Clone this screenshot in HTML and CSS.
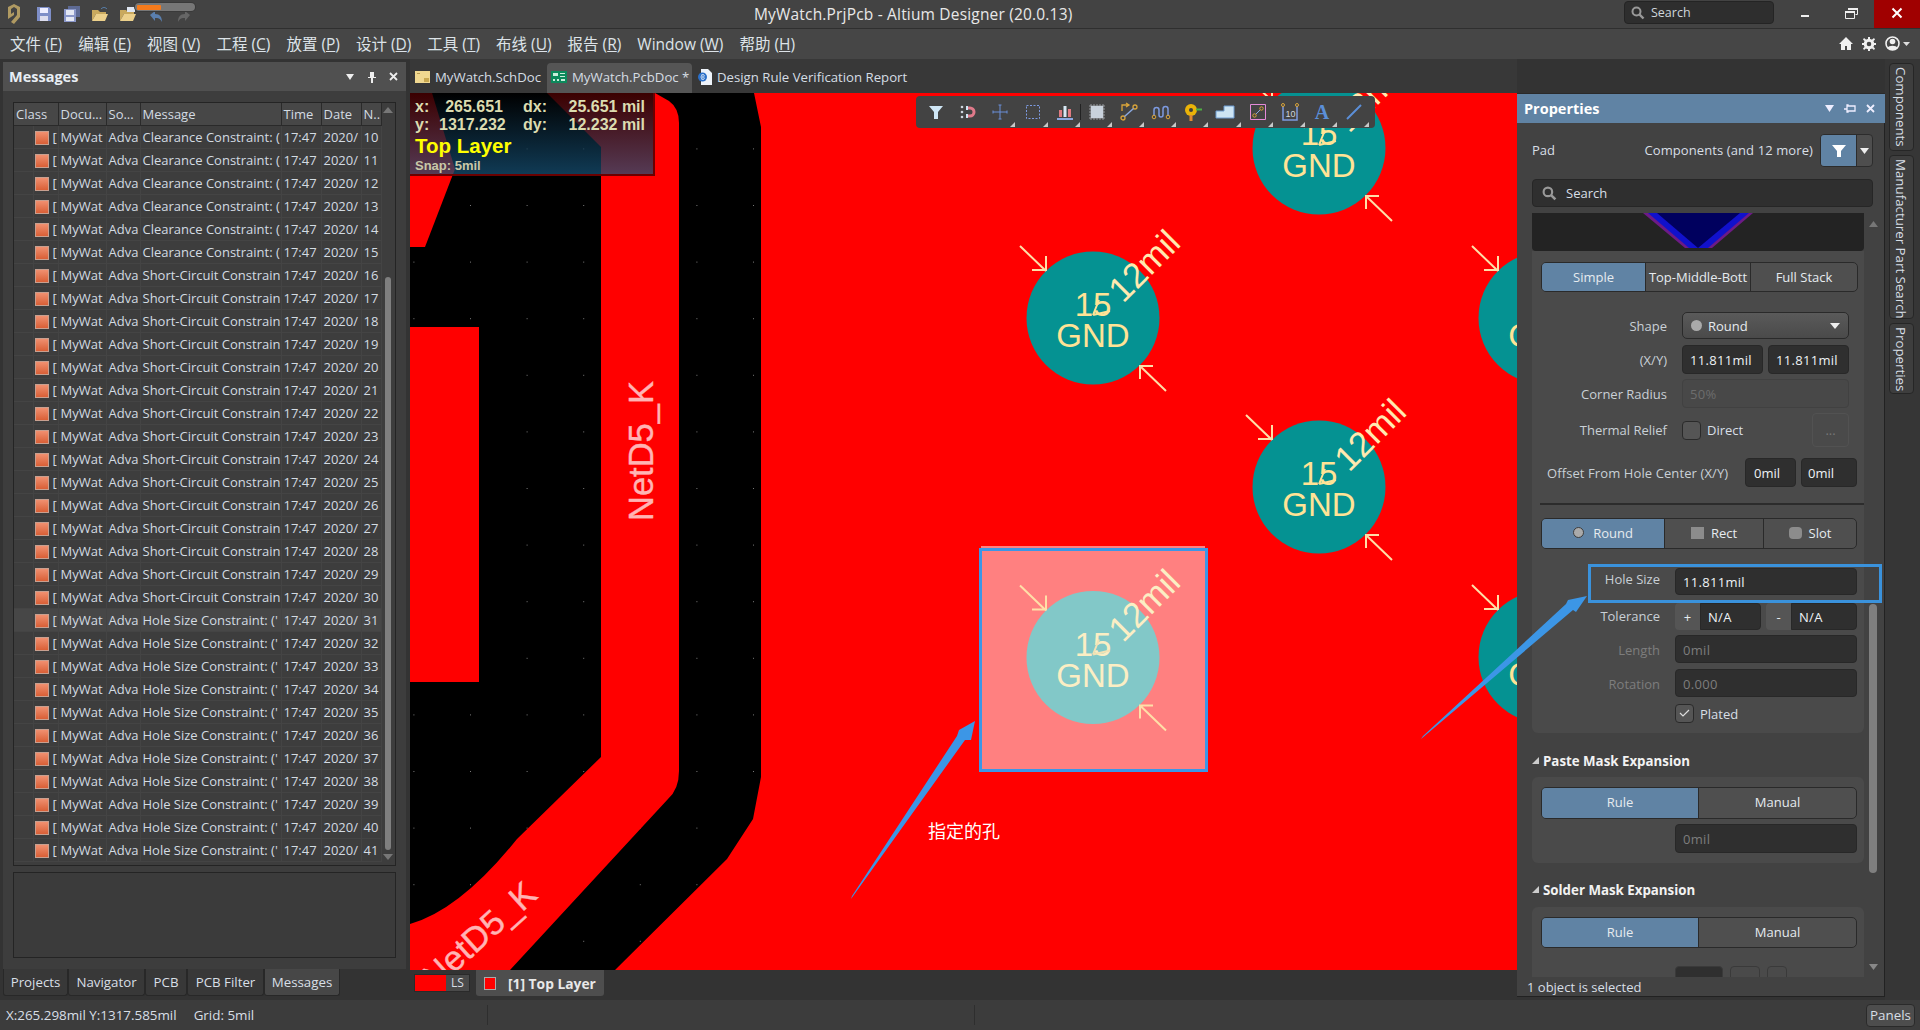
FILE: index.html
```html
<!DOCTYPE html>
<html lang="en">
<head>
<meta charset="utf-8">
<title>MyWatch.PrjPcb - Altium Designer (20.0.13)</title>
<link rel="stylesheet" href="styles.css">
</head>
<body>
<div class="app">
  <header class="titlebar">
    <div class="tb-left">
      <svg class="logo" width="14" height="20" viewBox="0 0 14 20"><path d="M1 3 7 0l6 3v10l-6 7-3-2 6-7V5L7 3 4 5v5l3-2v3l-6 4z" fill="#b09a62"/></svg>
      <svg class="qa" width="16" height="16" viewBox="0 0 16 16"><path d="M1 1h12l2 2v12H1z" fill="#7f8fc8"/><path d="M4 2h8v5H4z" fill="#eef"/><path d="M4 10h8v5H4z" fill="#dde"/></svg>
      <svg class="qa" width="18" height="16" viewBox="0 0 18 16"><path d="M5 0h12v11H5z" fill="#5d6a94"/><path d="M1 3h12v13H1z" fill="#8a97c9"/><path d="M3 4h8v5H3zM3 11h8v4H3z" fill="#e4e8f4"/></svg>
      <svg class="qa" width="18" height="16" viewBox="0 0 18 16"><path d="M1 4h6l2 2h6v2H5L1 15z" fill="#c9a95e"/><path d="M5 8h12l-3 7H1z" fill="#ecd08b"/><path d="M10 3c2-2 4-2 6 0" stroke="#5b87b8" fill="none"/></svg>
      <svg class="qa" width="18" height="16" viewBox="0 0 18 16"><path d="M1 4h6l2 2h6v2H5L1 15z" fill="#c9a95e"/><path d="M5 8h12l-3 7H1z" fill="#ecd08b"/><path d="M8 1h8v5H8z" fill="#dfe6f2"/></svg>
      <svg class="qa dim" width="16" height="14" viewBox="0 0 16 14"><path d="M2 5l5-4v3c5 0 7 3 7 8-2-4-4-4-7-4v3z" fill="#5a7fae"/></svg>
      <svg class="qa dim" width="16" height="14" viewBox="0 0 16 14"><path d="M14 5 9 1v3C4 4 2 7 2 12c2-4 4-4 7-4v3z" fill="#666"/></svg>
    </div>
    <div class="tb-title">MyWatch.PrjPcb - Altium Designer (20.0.13)</div>
    <div class="tb-right">
      <div class="tb-search">
        <svg width="14" height="14" viewBox="0 0 14 14"><circle cx="5.500" cy="5.500" r="4" fill="none" stroke="#999" stroke-width="2"/><path d="m8.500 8.500 4 4" stroke="#999" stroke-width="2.400"/></svg>
        <span>Search</span>
      </div>
      <div class="win-btn"><svg width="10" height="10" viewBox="0 0 10 10"><path d="M1 7h8v2H1z" fill="#eee"/></svg></div>
      <div class="win-btn restore"><svg width="13" height="11" viewBox="0 0 13 11"><path d="M3.500 .5h9v6h-2M.5 3.500h9v7h-9z" fill="none" stroke="#eee"/><path d="M0 3h10v2H0zM3 0h10v2H3z" fill="#eee"/></svg></div>
      <div class="win-btn close"><svg width="12" height="12" viewBox="0 0 12 12"><path d="m1.500 1.500 9 9m0-9-9 9" stroke="#fff" stroke-width="2"/></svg></div>
    </div>
    <div class="progress"><span class="progress-fill"></span></div>
  </header>

  <nav class="menubar">
    <span>文件 (<u>F</u>)</span><span>编辑 (<u>E</u>)</span><span>视图 (<u>V</u>)</span><span>工程 (<u>C</u>)</span><span>放置 (<u>P</u>)</span><span>设计 (<u>D</u>)</span><span>工具 (<u>T</u>)</span><span>布线 (<u>U</u>)</span><span>报告 (<u>R</u>)</span><span>Window (<u>W</u>)</span><span>帮助 (<u>H</u>)</span>
    <div class="menu-icons">
      <svg width="14" height="13" viewBox="0 0 14 13"><path d="M7 0 0 7h2v6h4V9h2v4h4V7h2z" fill="#f0f0f0"/></svg>
      <svg width="14" height="14" viewBox="0 0 14 14"><circle cx="7" cy="7" r="3.800" fill="none" stroke="#f0f0f0" stroke-width="3"/><path d="M6 0h2v3H6zM6 11h2v3H6zM0 6h3v2H0zM11 6h3v2h-3zM2 1l2.500 2-1.500 1.500L1 2.500zM12 1 9.500 3 11 4.500 13 2.500zM2 13l2.500-2L3 9.500 1 11.500zM12 13 9.500 11 11 9.500l2 2z" fill="#f0f0f0"/></svg>
      <svg class="user" width="26" height="15" viewBox="0 0 26 15"><circle cx="7.500" cy="7.500" r="6.500" fill="none" stroke="#f0f0f0" stroke-width="1.600"/><circle cx="7.500" cy="5.500" r="2.800" fill="#f0f0f0"/><path d="M2.500 12c1-3 9-3 10 0l-2.500 2h-5z" fill="#f0f0f0"/><path d="m18 6 7 0-3.500 4z" fill="#ddd"/></svg>
    </div>
  </nav>

  <main class="workspace">
    <aside class="left">
      <section class="panel">
        <div class="panel-head">
          <strong>Messages</strong>
          <span class="panel-tools">
            <svg width="10" height="8" viewBox="0 0 10 8"><path d="M1 1h8L5 7z" fill="#eee"/></svg>
            <svg width="10" height="12" viewBox="0 0 10 12"><path d="M3 1h4v5h2v1H6v5H4V7H1V6h2z" fill="#eee"/></svg>
            <svg width="9" height="9" viewBox="0 0 9 9"><path d="m1 1 7 7m0-7-7 7" stroke="#eee" stroke-width="1.800"/></svg>
          </span>
        </div>
        <div class="panel-body">
          <div class="msg-wrap">
            <table class="msgs">
              <colgroup><col class="c-a"><col class="c-b"><col class="c-d"><col class="c-s"><col class="c-m"><col class="c-t"><col class="c-t"><col class="c-n"></colgroup>
              <thead><tr><th colspan="2">Class</th><th>Docu...</th><th>So...</th><th>Message</th><th>Time</th><th>Date</th><th>N..</th></tr></thead>
              <tbody>
                <tr><td></td><td><i class="sq"></i>[</td><td>MyWat</td><td>Adva</td><td>Clearance Constraint: (</td><td>17:47</td><td>2020/</td><td>10</td></tr>
                <tr><td></td><td><i class="sq"></i>[</td><td>MyWat</td><td>Adva</td><td>Clearance Constraint: (</td><td>17:47</td><td>2020/</td><td>11</td></tr>
                <tr><td></td><td><i class="sq"></i>[</td><td>MyWat</td><td>Adva</td><td>Clearance Constraint: (</td><td>17:47</td><td>2020/</td><td>12</td></tr>
                <tr><td></td><td><i class="sq"></i>[</td><td>MyWat</td><td>Adva</td><td>Clearance Constraint: (</td><td>17:47</td><td>2020/</td><td>13</td></tr>
                <tr><td></td><td><i class="sq"></i>[</td><td>MyWat</td><td>Adva</td><td>Clearance Constraint: (</td><td>17:47</td><td>2020/</td><td>14</td></tr>
                <tr><td></td><td><i class="sq"></i>[</td><td>MyWat</td><td>Adva</td><td>Clearance Constraint: (</td><td>17:47</td><td>2020/</td><td>15</td></tr>
                <tr><td></td><td><i class="sq"></i>[</td><td>MyWat</td><td>Adva</td><td>Short-Circuit Constrain</td><td>17:47</td><td>2020/</td><td>16</td></tr>
                <tr><td></td><td><i class="sq"></i>[</td><td>MyWat</td><td>Adva</td><td>Short-Circuit Constrain</td><td>17:47</td><td>2020/</td><td>17</td></tr>
                <tr><td></td><td><i class="sq"></i>[</td><td>MyWat</td><td>Adva</td><td>Short-Circuit Constrain</td><td>17:47</td><td>2020/</td><td>18</td></tr>
                <tr><td></td><td><i class="sq"></i>[</td><td>MyWat</td><td>Adva</td><td>Short-Circuit Constrain</td><td>17:47</td><td>2020/</td><td>19</td></tr>
                <tr><td></td><td><i class="sq"></i>[</td><td>MyWat</td><td>Adva</td><td>Short-Circuit Constrain</td><td>17:47</td><td>2020/</td><td>20</td></tr>
                <tr><td></td><td><i class="sq"></i>[</td><td>MyWat</td><td>Adva</td><td>Short-Circuit Constrain</td><td>17:47</td><td>2020/</td><td>21</td></tr>
                <tr><td></td><td><i class="sq"></i>[</td><td>MyWat</td><td>Adva</td><td>Short-Circuit Constrain</td><td>17:47</td><td>2020/</td><td>22</td></tr>
                <tr><td></td><td><i class="sq"></i>[</td><td>MyWat</td><td>Adva</td><td>Short-Circuit Constrain</td><td>17:47</td><td>2020/</td><td>23</td></tr>
                <tr><td></td><td><i class="sq"></i>[</td><td>MyWat</td><td>Adva</td><td>Short-Circuit Constrain</td><td>17:47</td><td>2020/</td><td>24</td></tr>
                <tr><td></td><td><i class="sq"></i>[</td><td>MyWat</td><td>Adva</td><td>Short-Circuit Constrain</td><td>17:47</td><td>2020/</td><td>25</td></tr>
                <tr><td></td><td><i class="sq"></i>[</td><td>MyWat</td><td>Adva</td><td>Short-Circuit Constrain</td><td>17:47</td><td>2020/</td><td>26</td></tr>
                <tr><td></td><td><i class="sq"></i>[</td><td>MyWat</td><td>Adva</td><td>Short-Circuit Constrain</td><td>17:47</td><td>2020/</td><td>27</td></tr>
                <tr><td></td><td><i class="sq"></i>[</td><td>MyWat</td><td>Adva</td><td>Short-Circuit Constrain</td><td>17:47</td><td>2020/</td><td>28</td></tr>
                <tr><td></td><td><i class="sq"></i>[</td><td>MyWat</td><td>Adva</td><td>Short-Circuit Constrain</td><td>17:47</td><td>2020/</td><td>29</td></tr>
                <tr><td></td><td><i class="sq"></i>[</td><td>MyWat</td><td>Adva</td><td>Short-Circuit Constrain</td><td>17:47</td><td>2020/</td><td>30</td></tr>
                <tr class="hot"><td></td><td><i class="sq"></i>[</td><td>MyWat</td><td>Adva</td><td>Hole Size Constraint: ('</td><td>17:47</td><td>2020/</td><td>31</td></tr>
                <tr><td></td><td><i class="sq"></i>[</td><td>MyWat</td><td>Adva</td><td>Hole Size Constraint: ('</td><td>17:47</td><td>2020/</td><td>32</td></tr>
                <tr><td></td><td><i class="sq"></i>[</td><td>MyWat</td><td>Adva</td><td>Hole Size Constraint: ('</td><td>17:47</td><td>2020/</td><td>33</td></tr>
                <tr><td></td><td><i class="sq"></i>[</td><td>MyWat</td><td>Adva</td><td>Hole Size Constraint: ('</td><td>17:47</td><td>2020/</td><td>34</td></tr>
                <tr><td></td><td><i class="sq"></i>[</td><td>MyWat</td><td>Adva</td><td>Hole Size Constraint: ('</td><td>17:47</td><td>2020/</td><td>35</td></tr>
                <tr><td></td><td><i class="sq"></i>[</td><td>MyWat</td><td>Adva</td><td>Hole Size Constraint: ('</td><td>17:47</td><td>2020/</td><td>36</td></tr>
                <tr><td></td><td><i class="sq"></i>[</td><td>MyWat</td><td>Adva</td><td>Hole Size Constraint: ('</td><td>17:47</td><td>2020/</td><td>37</td></tr>
                <tr><td></td><td><i class="sq"></i>[</td><td>MyWat</td><td>Adva</td><td>Hole Size Constraint: ('</td><td>17:47</td><td>2020/</td><td>38</td></tr>
                <tr><td></td><td><i class="sq"></i>[</td><td>MyWat</td><td>Adva</td><td>Hole Size Constraint: ('</td><td>17:47</td><td>2020/</td><td>39</td></tr>
                <tr><td></td><td><i class="sq"></i>[</td><td>MyWat</td><td>Adva</td><td>Hole Size Constraint: ('</td><td>17:47</td><td>2020/</td><td>40</td></tr>
                <tr><td></td><td><i class="sq"></i>[</td><td>MyWat</td><td>Adva</td><td>Hole Size Constraint: ('</td><td>17:47</td><td>2020/</td><td>41</td></tr>
              </tbody>
            </table>
            <div class="vscroll">
              <svg class="sb-arrow" width="10" height="6" viewBox="0 0 10 6"><path d="M0 6h10L5 0z" fill="#777"/></svg>
              <div class="sb-thumb"></div>
              <svg class="sb-arrow" width="10" height="6" viewBox="0 0 10 6"><path d="M0 0h10L5 6z" fill="#777"/></svg>
            </div>
          </div>
          <div class="msg-detail"></div>
        </div>
      </section>
      <div class="btabs">
        <span>Projects</span><span>Navigator</span><span>PCB</span><span>PCB Filter</span><span class="on">Messages</span>
      </div>
    </aside>

    <section class="center">
      <div class="doctabs">
        <div class="doctab t1">
          <svg width="15" height="12" viewBox="0 0 15 12"><path d="M0 0h15v12H0z" fill="#f0d890"/><path d="M9 7h5v4H9z" fill="#c9a850"/><path d="M2 2h3v1H2z" fill="#b89a50"/></svg>
          <span>MyWatch.SchDoc</span>
        </div>
        <div class="doctab t2 on">
          <svg width="16" height="12" viewBox="0 0 16 12"><path d="M0 0h16v12H0z" fill="#0c8a5c"/><path d="M2 2h5v3H2zM9 2h5v1H9zM9 5h5v1H9zM2 8h2v2H2zM6 8h2v2H6zM10 8h4v2h-4z" fill="#c9eedb"/></svg>
          <span>MyWatch.PcbDoc *</span>
        </div>
        <div class="doctab t3">
          <svg width="14" height="16" viewBox="0 0 14 16"><path d="M3 0h7l4 4v12H3z" fill="#eef3fa"/><circle cx="4.500" cy="8" r="4.500" fill="#2a6fc9"/><path d="M2.500 8h4M3 6.500c1-1 3-1 3.500 0M3 9.500c1 1 3 1 3.500 0" stroke="#fff" fill="none"/></svg>
          <span>Design Rule Verification Report</span>
        </div>
      </div>

      <div class="canvas">
        <svg class="board" width="1107" height="877" viewBox="410 93 1107 877">
          <defs>
            <pattern id="grid" x="470" y="205" width="56.600" height="56.600" patternUnits="userSpaceOnUse"><rect width="1" height="1" fill="#7a7a7a"/></pattern>
            <g id="marks" class="mark">
              <path d="M-73-72-47-47M-61-48h14v-14"/>
              <path d="M73 73 47 48M60 48H47v13"/>
            </g>
          </defs>
          <rect x="410" y="93" width="1107" height="877" fill="#000"/>
          <rect x="410" y="93" width="1107" height="877" fill="url(#grid)"/>
          <path class="cu" d="M410 93h22l23 76-30 78h-15z"/>
          <path class="cu" d="M410 327h69v355h-69z"/>
          <path class="cu" d="M547 93h108l14 8q10 7 10 22V771q0 18-11 28L510 970H410V924q50-14 107-85l84-82V147z"/>
          <path class="cu" d="M754 93l7 34V777l-8 42-26 40L615 970H1517V93z"/>
          <text class="net" transform="translate(653 521) rotate(-90)">NetD5_K</text>
          <text class="net" transform="translate(539 897) rotate(-42)" text-anchor="end">NetD5_K</text>

          <g class="pad" transform="translate(1319 148)">
            <circle r="66.500"/><use href="#marks"/>
            <text class="pn" y="-3" text-anchor="middle">15</text><path class="smear" d="M0-3 6-18M0-3 17-7"/>
            <text class="pn" y="29" text-anchor="middle">GND</text>
            <text class="dim" transform="translate(30 -14) rotate(-45)">12mil</text>
          </g>
          <g class="pad" transform="translate(1093 318)">
            <circle r="66.500"/><use href="#marks"/>
            <text class="pn" y="-2" text-anchor="middle">15</text><path class="smear" d="M0-3 6-18M0-3 17-7"/>
            <text class="pn" y="29" text-anchor="middle">GND</text>
            <text class="dim" transform="translate(30 -14) rotate(-45)">12mil</text>
          </g>
          <g class="pad" transform="translate(1319 487)">
            <circle r="66.500"/><use href="#marks"/>
            <text class="pn" y="-2" text-anchor="middle">15</text><path class="smear" d="M0-3 6-18M0-3 17-7"/>
            <text class="pn" y="29" text-anchor="middle">GND</text>
            <text class="dim" transform="translate(30 -14) rotate(-45)">12mil</text>
          </g>
          <g class="pad" transform="translate(1545 318)">
            <circle r="66.500"/><use href="#marks"/>
            <text class="pn" y="29" text-anchor="middle">GND</text>
          </g>
          <g class="pad" transform="translate(1545 657)">
            <circle r="66.500"/><use href="#marks"/>
            <text class="pn" y="29" text-anchor="middle">GND</text>
          </g>
          <rect x="981" y="546" width="224" height="3" fill="#ff8080"/>
          <rect class="sel-box" x="980.500" y="549.500" width="226" height="221"/>
          <g class="pad sel" transform="translate(1093 657.500)">
            <circle r="66.500"/><use href="#marks"/>
            <text class="pn" y="-2" text-anchor="middle">15</text><path class="smear" d="M0-3 6-18M0-3 17-7"/>
            <text class="pn" y="29" text-anchor="middle">GND</text>
            <text class="dim" transform="translate(30 -14) rotate(-45)">12mil</text>
          </g>
          <text class="note" x="928" y="838">指定的孔</text>
        </svg>

        <div class="info">
          <span class="k">x:</span><span class="v">265.651</span><span class="k">dx:</span><span class="v">25.651 mil</span>
          <span class="k">y:</span><span class="v">1317.232</span><span class="k">dy:</span><span class="v">12.232 mil</span>
          <span class="layer">Top Layer</span>
          <span class="snap">Snap: 5mil</span>
        </div>

        <div class="toolbar">
          <span class="tbtn plain"><svg width="20" height="20" viewBox="0 0 20 20"><path d="M3 4h14l-5 6v7H8v-7z" fill="#cfe6f5"/></svg></span>
          <span class="tbtn plain"><svg width="20" height="20" viewBox="0 0 20 20"><path d="M8 6h4a4 4 0 0 1 0 8H8" fill="none" stroke="#e07a8a" stroke-width="3"/><path d="M8 4h2v4H8zM8 12h2v4H8z" fill="#cfe6f5"/><circle cx="4" cy="5" r="1.300" fill="#cfd6de"/><circle cx="4" cy="10" r="1.300" fill="#cfd6de"/><circle cx="4" cy="15" r="1.300" fill="#cfd6de"/></svg></span>
          <span class="tbtn"><svg width="20" height="20" viewBox="0 0 20 20"><path d="M10 3v14M3 10h14M8.500 3h3M8.500 17h3M3 8.500v3M17 8.500v3" stroke="#6a8fd8" fill="none"/></svg></span>
          <span class="tbtn"><svg width="20" height="20" viewBox="0 0 20 20"><path d="M3.500 3.500h13v13h-13z" fill="none" stroke="#7d9ae0" stroke-dasharray="2 1.500"/></svg></span>
          <span class="tbtn divider"><svg width="20" height="20" viewBox="0 0 20 20"><path d="M4 8h3v7H4z" fill="#e07a80"/><path d="M8.500 4h3v11h-3z" fill="#d8e8f4"/><path d="M13 7h3v8h-3z" fill="#e07a80"/><path d="M2 16h16v2H2z" fill="#8aa8e0"/></svg></span>
          <span class="tbtn"><svg width="20" height="20" viewBox="0 0 20 20"><path d="M2 4h16M2 7h16M2 10h16M2 13h16M2 16h16M4 2v16M7 2v16M10 2v16M13 2v16M16 2v16" stroke="#a9adb3" stroke-width=".8"/><path d="M4 4h12v12H4z" fill="#c9d2dc"/></svg></span>
          <span class="tbtn"><svg width="20" height="20" viewBox="0 0 20 20"><path d="M3 9V3h6M7 1l3 2-3 2" fill="none" stroke="#d9a43a" stroke-width="1.300"/><circle cx="4" cy="16" r="2" fill="none" stroke="#d9a43a" stroke-width="1.300"/><circle cx="16" cy="5" r="2" fill="none" stroke="#d9a43a" stroke-width="1.300"/><path d="M5.500 14.500 14.500 6.500" stroke="#8aa8e0" stroke-width="1.500"/></svg></span>
          <span class="tbtn"><svg width="20" height="20" viewBox="0 0 20 20"><path d="M3 14V8a2.500 2.500 0 0 1 5 0v5a2 2 0 0 0 4 0V7a2.500 2.500 0 0 1 5 0v7" fill="none" stroke="#7d9ae0" stroke-width="1.500"/><circle cx="3" cy="15" r="1.800" fill="none" stroke="#d9a43a"/><circle cx="17" cy="15" r="1.800" fill="none" stroke="#d9a43a"/></svg></span>
          <span class="tbtn"><svg width="20" height="20" viewBox="0 0 20 20"><circle cx="8" cy="8" r="6" fill="#eab308"/><circle cx="8" cy="8" r="2" fill="#3d3d3d"/><path d="M6.500 13h3v6h-3z" fill="#e08a30"/><path d="M13 6.500h6v2h-6z" fill="#4fb043"/></svg></span>
          <span class="tbtn"><svg width="20" height="20" viewBox="0 0 20 20"><path d="M1 9h8V4h10v12H1z" fill="#cde4f3" stroke="#6c9bd0"/></svg></span>
          <span class="tbtn"><svg width="20" height="20" viewBox="0 0 20 20"><path d="M2.500 2.500h15v15h-15z" fill="none" stroke="#e58ad8"/><circle cx="6.500" cy="13.500" r="1.700" fill="none" stroke="#d9a43a"/><circle cx="13.500" cy="6.500" r="1.700" fill="none" stroke="#d9a43a"/><path d="m8 12 4-4" stroke="#8aa8e0"/></svg></span>
          <span class="tbtn"><svg width="20" height="20" viewBox="0 0 20 20"><path d="M3 4v14h14V4" fill="none" stroke="#7d9ae0" stroke-width="1.500"/><circle cx="3" cy="3" r="1.500" fill="none" stroke="#d9a43a"/><circle cx="17" cy="3" r="1.500" fill="none" stroke="#d9a43a"/><text class="tb-ten" x="5.500" y="15">10</text></svg></span>
          <span class="tbtn tbtn-a">A</span>
          <span class="tbtn"><svg width="20" height="20" viewBox="0 0 20 20"><path d="M3 17 17 3" stroke="#5b8fd8" stroke-width="2"/></svg></span>
        </div>
      </div>

      <div class="layerbar">
        <div class="ls"><span class="ls-red"></span><span class="ls-txt">LS</span></div>
        <div class="layertab"><i class="lay-swatch"></i><b>[1] Top Layer</b></div>
      </div>
    </section>

    <aside class="props">
      <div class="props-head">
        <strong>Properties</strong>
        <span class="panel-tools ptools">
          <svg width="9" height="7" viewBox="0 0 9 7"><path d="M0 0h9L4.500 7z" fill="#eef"/></svg>
          <svg width="12" height="10" viewBox="0 0 12 10"><path d="M0 5h3M3 1h1v1h7v5H4v1H3z" fill="none" stroke="#eef" stroke-width="1.300"/></svg>
          <svg width="9" height="9" viewBox="0 0 9 9"><path d="m1 1 7 7m0-7-7 7" stroke="#eef" stroke-width="1.800"/></svg>
        </span>
      </div>
      <div class="props-scroll">
        <div class="p-top">
          <span class="p-pad">Pad</span>
          <span class="p-comp">Components (and 12 more)</span>
          <div class="filterbtn">
            <span class="f-main"><svg width="16" height="14" viewBox="0 0 16 14"><path d="M1 1h14l-5 6v6H6V7z" fill="#fff"/></svg></span>
            <span class="f-drop"><svg width="9" height="6" viewBox="0 0 9 6"><path d="M0 0h9L4.500 6z" fill="#eee"/></svg></span>
          </div>
        </div>
        <div class="p-search">
          <svg width="15" height="15" viewBox="0 0 14 14"><circle cx="5.500" cy="5.500" r="4" fill="none" stroke="#999" stroke-width="2"/><path d="m8.500 8.500 4 4" stroke="#999" stroke-width="2.400"/></svg>
          <span>Search</span>
        </div>
        <div class="preview">
          <svg width="332" height="38" viewBox="0 0 332 38"><path d="M111 0h110l-41 35h-27z" fill="#6d1a86"/><path d="M116 0h101l-41 35h-19z" fill="#1111cc"/><path d="M125 0h83l-42 35z" fill="#00005e"/></svg>
        </div>
        <div class="card c1">
          <div class="seg s-top"><span class="on w1">Simple</span><span class="w2">Top-Middle-Bott</span><span class="w3">Full Stack</span></div>
          <div class="frow r-shape"><label>Shape</label><div class="select"><i class="dot"></i><span>Round</span><svg width="10" height="6" viewBox="0 0 10 6"><path d="M0 0h10L5 6z" fill="#eee"/></svg></div></div>
          <div class="frow r-xy"><label>(X/Y)</label><div class="pair"><div class="inp">11.811mil</div><div class="inp">11.811mil</div></div></div>
          <div class="frow r-corner"><label>Corner Radius</label><div class="inp off-light">50%</div></div>
          <div class="frow r-therm"><label>Thermal Relief</label><div class="therm"><i class="chk"></i><span>Direct</span><span class="dots">...</span></div></div>
          <div class="r-offset"><label>Offset From Hole Center (X/Y)</label><div class="inp">0mil</div><div class="inp">0mil</div></div>
          <hr class="rule">
          <div class="seg s-hole"><span class="on h1"><i class="dot ring"></i>Round</span><span class="h2"><i class="sq-ic"></i>Rect</span><span class="h3"><i class="slot-ic"></i>Slot</span></div>
          <div class="frow wide r-hole"><label class="up">Hole Size</label><div class="inp">11.811mil</div></div>
          <div class="frow wide r-tol"><label>Tolerance</label>
            <div class="tol"><span class="pm">+</span><div class="inp">N/A</div><span class="pm gapl">-</span><div class="inp">N/A</div></div></div>
          <div class="frow wide r-len"><label class="mute">Length</label><div class="inp off">0mil</div></div>
          <div class="frow wide r-rot"><label class="mute">Rotation</label><div class="inp off">0.000</div></div>
          <div class="frow wide r-plated"><label></label><div class="therm"><i class="chk"><svg width="11" height="9" viewBox="0 0 11 9"><path d="m1 4 3 3 6-6" fill="none" stroke="#ddd" stroke-width="1.200"/></svg></i><span>Plated</span></div></div>
        </div>
        <div class="sect-title"><svg width="7" height="7" viewBox="0 0 7 7"><path d="M7 0v7H0z" fill="#ccc"/></svg><strong>Paste Mask Expansion</strong></div>
        <div class="card c2">
          <div class="seg s-rule"><span class="on">Rule</span><span>Manual</span></div>
          <div class="frow wide r-paste"><label></label><div class="inp off">0mil</div></div>
        </div>
        <div class="sect-title s-solder"><svg width="7" height="7" viewBox="0 0 7 7"><path d="M7 0v7H0z" fill="#ccc"/></svg><strong>Solder Mask Expansion</strong></div>
        <div class="card c3">
          <div class="seg s-rule s2"><span class="on">Rule</span><span>Manual</span></div>
          <div class="cut-row"><i class="cut a"></i><i class="cut b"></i><i class="cut c"></i></div>
        </div>
      </div>
      <div class="p-sb"></div>
      <svg class="p-arrow up-a" width="9" height="6" viewBox="0 0 9 6"><path d="M0 6h9L4.500 0z" fill="#777"/></svg>
      <svg class="p-arrow down-a" width="9" height="6" viewBox="0 0 9 6"><path d="M0 0h9L4.500 6z" fill="#888"/></svg>
      <div class="p-foot">1 object is selected</div>
    </aside>

    <aside class="rail">
      <span class="rtab r1">Components</span>
      <span class="rtab r2">Manufacturer Part Search</span>
      <span class="rtab r3">Properties</span>
    </aside>
  </main>

  <footer class="status">
    <span class="st-xy">X:265.298mil Y:1317.585mil</span>
    <span class="st-grid">Grid: 5mil</span>
    <i class="st-sep s1"></i>
    <i class="st-sep s2"></i>
    <span class="panels-btn">Panels</span>
  </footer>

  <svg class="annot" width="1920" height="1030" viewBox="0 0 1920 1030">
    <rect class="hl" x="1589.500" y="565.500" width="291" height="36"/>
    <path class="ar" d="M851 899 852 896 957 736 959 730 975 721 971 740 965 740z"/>
    <path class="ar" d="M1421 739 1423 736 1566 604 1568 600 1587 596 1576 612 1573 610z"/>
  </svg>
</div>
</body>
</html>
```
FILE: styles.css
```css
* { box-sizing: border-box; }
html, body { margin: 0; padding: 0; height: 100%; overflow: hidden; background: #333; }
body { font-family: "Open Sans", "Noto Sans CJK SC", sans-serif; font-size: 13px; color: #d8dfe6; }
.app { position: relative; width: 1920px; height: 1030px; display: flex; flex-direction: column; overflow: hidden; background: #333; }

/* title bar */
.titlebar { position: relative; height: 29px; flex: none; display: flex; align-items: center; background: #434343; border-bottom: 1px solid #2f2f2f; }
.tb-left { width: 754px; flex: none; display: flex; align-items: center; padding-left: 7px; }
.logo { margin-right: 14px; }
.qa { width: 18px; margin-right: 10px; flex: none; }
.qa.dim { margin-top: 5px; }
.tb-title { font-size: 15.500px; letter-spacing: .18px; color: #e8e8e8; white-space: nowrap; }
.tb-right { margin-left: auto; display: flex; align-items: flex-start; height: 28px; }
.tb-search { width: 150px; height: 23px; margin: 1px 8px 0 0; display: flex; align-items: center; gap: 6px; padding-left: 6px; background: #2e2e2e; border: 1px solid #242424; border-radius: 4px; color: #cfd6dc; font-size: 12.500px; }
.win-btn { width: 46px; height: 28px; display: flex; align-items: center; justify-content: center; padding-bottom: 2px; }
.win-btn.close { background: #a00000; }
.progress { position: absolute; left: 135px; top: 3px; width: 60px; height: 8px; background: #777; border-radius: 4px; box-shadow: 0 0 0 1px #3a3a3a; }
.progress-fill { display: block; width: 24px; height: 5px; margin: 1.500px 2px; background: #f47a1c; border-radius: 1px; }

/* menu */
.menubar { height: 30px; flex: none; display: flex; align-items: center; gap: 16px; padding: 0 0 1px 10px; background: #464646; font-size: 15.500px; color: #dde3e8; white-space: nowrap; }
.menu-icons { margin-left: auto; display: flex; align-items: center; gap: 9px; padding-right: 9px; }

/* workspace */
.workspace { height: 941px; flex: none; display: flex; background: #333; }
.left { width: 410px; flex: none; padding: 3px 4px 0 3px; display: flex; flex-direction: column; }
.panel { height: 907px; flex: none; display: flex; flex-direction: column; background: #3d3d3d; }
.panel-head { height: 29px; flex: none; display: flex; align-items: center; justify-content: space-between; padding: 0 6px; background: #505050; font-size: 14.500px; color: #e8eef4; }
.panel-tools { display: flex; align-items: center; gap: 12px; padding-right: 2px; }
.panel-body { flex: 1; padding: 11px 10px 11px; display: flex; flex-direction: column; gap: 6px; }
.msg-wrap { height: 764px; flex: none; display: flex; border: 1px solid #242424; }
.msgs { width: 367px; flex: none; table-layout: fixed; border-collapse: collapse; font-size: 13px; color: #d3dbe2; align-self: flex-start; }
.c-a { width: 19px; } .c-b { width: 25px; } .c-d { width: 48px; } .c-s { width: 34px; } .c-m { width: 141px; } .c-t { width: 40px; } .c-n { width: 20px; }
.msgs th { height: 22px; font-weight: 400; text-align: left; padding: 0 2px; background: #474747; border-bottom: 1px solid #2a2a2a; border-right: 1px solid #2a2a2a; white-space: nowrap; overflow: hidden; }
.msgs td { height: 23px; padding: 0 2px; white-space: nowrap; overflow: hidden; border-right: 1px solid #444; border-bottom: 1px solid #444; }
.msgs td:nth-child(2) { padding-left: 1px; }
.msgs tr.hot td { background: #474747; }
.sq { display: inline-block; width: 14px; height: 14px; vertical-align: -3px; margin-right: 4px; background: linear-gradient(#f09070, #d95f36); border: 1px solid #c8a090; }
.vscroll { flex: 1; display: flex; flex-direction: column; align-items: center; padding: 4px 0 3px; }
.sb-thumb { width: 6px; height: 573px; margin-top: 164px; background: #7f7f7f; border-radius: 3px; }
.sb-arrow + .sb-thumb + .sb-arrow { margin-top: 4px; }
.msg-detail { height: 86px; flex: none; border: 1px solid #242424; background: #3b3b3b; }
.btabs { height: 27px; flex: none; display: flex; font-size: 13.300px; }
.btabs span { display: flex; align-items: center; justify-content: center; background: #383838; border: 1px solid #282828; border-top: 0; border-radius: 0 0 3px 3px; }
.btabs span:nth-child(1) { width: 65px; } .btabs span:nth-child(2) { width: 77px; } .btabs span:nth-child(3) { width: 42px; } .btabs span:nth-child(4) { width: 77px; } .btabs span:nth-child(5) { width: 76px; }
.btabs .on { background: #474747; }

/* center */
.center { width: 1107px; flex: none; display: flex; flex-direction: column; }
.doctabs { height: 34px; flex: none; display: flex; align-items: flex-end; background: #383838; font-size: 13.200px; color: #d5dde4; }
.doctab { height: 30px; display: flex; align-items: center; gap: 5px; white-space: nowrap; padding-bottom: 2px; }
.doctab svg { flex: none; }
.doctab.t1 { width: 137px; padding-left: 5px; }
.doctab.t2 { width: 145px; padding-left: 4px; }
.doctab.t2.on { background: #555; border-radius: 4px 4px 0 0; }
.doctab.t3 { padding-left: 6px; }
.canvas { position: relative; height: 877px; flex: none; overflow: hidden; background: #000; }
.board { display: block; }
.cu { fill: #f00; }
.net { font: 34.500px "Liberation Sans", sans-serif; fill: #ffb4b4; stroke: #ffb4b4; stroke-width: .4px; }
.pad circle { fill: #059292; }
.pad text { font-family: "Liberation Sans", sans-serif; fill: #ffe396; }
.pad .pn { font-size: 33px; }
.pad .dim { font-size: 35px; fill: #ffe9b0; }
.smear { fill: none; stroke: #ffe396; stroke-width: 2; }
.mark { fill: none; stroke: #ffdfa8; stroke-width: 2; }
.sel circle { fill: #82c8c8; }
.sel text, .sel .dim { fill: #fbeec4; }
.sel .smear { stroke: #f3e2b4; }
.sel-box { fill: #ff8080; stroke: #3c96e6; stroke-width: 3; }
.note { font: 18px "Noto Sans CJK SC", sans-serif; fill: #fff; }

.info { position: absolute; left: 0; top: 0; width: 245px; height: 83px; padding: 5px 8px 0 5px; display: grid; grid-template-columns: 24px 64px 30px 1fr; grid-auto-rows: 18px; column-gap: 0; font: bold 16px/18px "Liberation Sans", sans-serif; color: #dcdcb0; background: linear-gradient(rgba(0,0,0,.77), rgba(22,80,116,.73)); border-right: 2px solid #6a0000; border-bottom: 2px solid #6a0000; }
.info .v { text-align: right; white-space: nowrap; }
.info .k:nth-child(3), .info .k:nth-child(7) { padding-left: 20px; width: 60px; margin-right: -30px; }
.layer { grid-column: 1 / -1; font-size: 20.500px; line-height: 23px; color: #ff0; height: 23px; }
.snap { grid-column: 1 / -1; font-size: 13px; line-height: 17px; margin-top: 5px; color: #c8c8a8; }

.toolbar { position: absolute; left: 506px; top: 3px; width: 459px; height: 32px; display: flex; align-items: center; padding-left: 4px; background: #434343; border-radius: 4px; }
.tbtn { position: relative; width: 32.170px; height: 32px; flex: none; display: flex; align-items: center; justify-content: center; }
.tbtn::after { content: ""; position: absolute; right: 1px; bottom: 1px; border-left: 5px solid transparent; border-bottom: 5px solid #c8c8c8; }
.tbtn.plain::after { display: none; }
.tbtn.divider::before { content: ""; position: absolute; right: 0; top: 8px; height: 16px; width: 1px; background: #222; }
.tbtn-a { font: bold 20px "Liberation Serif", serif; color: #5b8fd8; }
.tb-ten { font: 9px "Liberation Sans", sans-serif; fill: #cfd6de; }

.layerbar { height: 30px; flex: none; display: flex; align-items: flex-start; background: #333; }
.ls { width: 56px; height: 18px; margin: 4px 0 0 4px; display: flex; border: 1px solid #2a2a2a; }
.ls-red { width: 31px; background: #f00; }
.ls-txt { flex: 1; background: #4a4a4a; font-size: 12px; line-height: 16px; text-align: center; }
.layertab { width: 128px; height: 26px; margin-left: 6px; display: flex; align-items: center; gap: 12px; padding-left: 8px; background: #4e4e4e; border-radius: 0 0 3px 3px; font-size: 13.800px; color: #e8e8e8; white-space: nowrap; }
.lay-swatch { width: 12px; height: 13px; background: #f00; border: 1px solid #aaa; }

/* properties */
.props { position: relative; width: 368px; flex: none; height: 938px; margin-top: 0; padding-top: 34px; display: flex; flex-direction: column; }
.props-head { height: 30px; flex: none; display: flex; align-items: center; justify-content: space-between; padding: 0 6px 0 7px; background: #6083a4; border-top: 1px solid #2a2a2a; color: #fff; font-size: 14.500px; }
.ptools { gap: 10px; padding-right: 4px; }
.props-scroll { height: 854px; flex: none; overflow: hidden; background: #424242; padding-left: 15px; border-right: 1px solid #222; }
.p-top { height: 44px; padding-top: 11px; padding-right: 11px; display: flex; align-items: center; }
.p-pad { flex: 1; margin-bottom: 2px; }
.p-comp { margin: 0 7px 2px 0; white-space: nowrap; letter-spacing: .1px; }
.filterbtn { width: 53px; height: 33px; display: flex; border: 1px solid #2c2c2c; border-radius: 4px; overflow: hidden; background: #4e4e4e; }
.f-main { width: 36px; background: #6083a4; display: flex; align-items: center; justify-content: center; border-right: 1px solid #2c2c2c; }
.f-drop { flex: 1; display: flex; align-items: center; justify-content: center; }
.p-search { width: 341px; height: 28px; margin-top: 12px; display: flex; align-items: center; gap: 9px; padding-left: 9px; background: #2f2f2f; border: 1px solid #262626; border-radius: 4px; }
.preview { width: 332px; height: 38px; margin-top: 6px; background: #232323; border-radius: 0 0 4px 4px; }
.preview svg { display: block; }
.card { width: 332px; background: #4a4a4a; border-radius: 0 0 6px 6px; padding: 11px 0 0 9px; }
.c1 { height: 482px; }
.c2 { height: 86px; padding-top: 10px; border-radius: 6px; }
.c3 { padding-top: 10px; height: 90px; border-radius: 6px; }
.seg { display: flex; height: 30px; width: 316px; border: 1px solid #2a2a2a; border-radius: 5px; overflow: hidden; background: #4f4f4f; color: #e6ebef; }
.seg span { display: flex; align-items: center; justify-content: center; overflow: hidden; white-space: nowrap; border-right: 1px solid #2a2a2a; }
.seg span:last-child { border-right: 0; }
.seg .on { background: #6083a4; }
.w1 { width: 104px; } .w2 { width: 105px; } .w3 { flex: 1; }
.s-top { width: 317px; }
.h1 { width: 123px; gap: 9px; padding-bottom: 2px; } .h2 { width: 99px; gap: 7px; padding-bottom: 2px; } .h3 { flex: 1; gap: 7px; padding-bottom: 2px; }
.s-hole { height: 31px; margin-top: 13px; }
.s-rule { height: 32px; }
.s-rule span { width: 157px; padding-bottom: 2px; }
.s-rule span:last-child { flex: 1; }
.s2 { height: 31px; }
.frow { display: grid; grid-template-columns: 126px 167px; column-gap: 15px; align-items: center; }
.frow.wide { grid-template-columns: 119px 182px; }
.frow label, .r-offset label { text-align: right; color: #c9d0d6; white-space: nowrap; }
.frow .mute { color: #7d7d7d; padding-top: 2px; }
.frow .up { margin-bottom: 5px; }
.inp { height: 100%; display: flex; align-items: center; padding-left: 7px; background: #2f2f2f; border: 1px solid #282828; border-radius: 4px; color: #eef2f5; white-space: nowrap; letter-spacing: .3px; }
.inp.off { color: #7d7d7d; padding-top: 2px; }
.r-paste .inp.off { padding-top: 0; }
.inp.off-light { color: #6d6d6d; background: #484848; border-color: #414141; }
.select { height: 27px; display: flex; align-items: center; padding: 0 8px 0 8px; gap: 6px; border: 1px solid #2a2a2a; border-radius: 5px; background: linear-gradient(#5a5a5a, #4a4a4a); color: #e6ebef; }
.select span { flex: 1; }
.dot { display: inline-block; width: 11px; height: 11px; border-radius: 50%; background: #aaa; }
.dot.ring { border: 1px solid #3d3d3d; background: #aaa; }
.r-shape { margin-top: 20px; height: 27px; }
.r-xy { margin-top: 6px; height: 29px; }
.pair { display: flex; gap: 5px; height: 29px; }
.pair .inp { flex: 1; padding-left: 7px; }
.r-corner { margin-top: 5px; height: 29px; }
.r-therm { margin-top: 5px; height: 34px; }
.therm { display: flex; align-items: center; gap: 6px; height: 100%; }
.chk { width: 19px; height: 19px; flex: none; display: flex; align-items: center; justify-content: center; background: #555; border: 1px solid #2a2a2a; border-radius: 4px; }
.dots { width: 37px; height: 34px; margin-left: auto; display: flex; align-items: center; justify-content: center; border: 1px solid #525252; border-radius: 4px; color: #777; }
.r-offset { margin-top: 11px; height: 29px; padding-left: 6px; display: flex; align-items: center; }
.r-offset label { width: 183px; margin-right: 15px; text-align: left; letter-spacing: .1px; }
.r-offset .inp:nth-of-type(1) { width: 51px; padding-left: 8px; letter-spacing: 0; }
.r-offset .inp:nth-of-type(2) { width: 56px; margin-left: 5px; padding-left: 6px; letter-spacing: 0; }
.rule { height: 2px; margin: 16px 0 0 -1px; border: 0; background: #2c2c2c; }
.sq-ic { width: 13px; height: 12px; background: #8c8c8c; }
.slot-ic { width: 13px; height: 12px; background: #8c8c8c; border-radius: 4px; }
.r-hole { margin-top: 19px; height: 27px; }
.r-tol { margin-top: 8px; height: 27px; }
.r-tol label { padding-bottom: 2px; }
.tol { display: flex; height: 27px; }
.tol .inp { width: 61px; border-radius: 0 4px 4px 0; }
.tol .inp:last-child { width: 66px; }
.pm { width: 25px; display: flex; align-items: center; justify-content: center; background: #555; border-radius: 4px 0 0 4px; color: #e6ebef; }
.pm.gapl { margin-left: 5px; }
.r-len { margin-top: 5px; height: 28px; }
.r-rot { margin-top: 6px; height: 28px; }
.r-plated { margin-top: 6px; height: 19px; }
.r-plated span { padding-top: 2px; }
.sect-title { height: 44px; display: flex; align-items: center; gap: 4px; padding-top: 11px; color: #f2f2f2; font-size: 13.300px; }
.s-solder { padding-top: 9px; }
.r-paste { margin-top: 5px; height: 29px; }
.cut-row { display: flex; margin: 18px 0 0 134px; gap: 7px; }
.cut { height: 30px; border: 1px solid #3a3a3a; border-radius: 4px; }
.cut.a { width: 48px; background: #2f2f2f; }
.cut.b { width: 30px; }
.cut.c { width: 20px; }
.p-sb { position: absolute; left: 352px; top: 545px; width: 8px; height: 269px; background: #7f7f7f; border-radius: 4px; }
.p-arrow { position: absolute; left: 352px; }
.up-a { top: 162px; }
.down-a { top: 905px; }
.p-foot { height: 20px; flex: none; padding: 0 0 0 10px; line-height: 20px; background: #424242; border-right: 1px solid #222; border-bottom: 1px solid #222; }

/* rail */
.rail { flex: 1; padding: 4px 0 0 4px; display: flex; flex-direction: column; gap: 4px; background: #363636; }
.rtab { width: 25px; display: flex; align-items: center; padding: 3px 2px 0 0; writing-mode: vertical-rl; background: #3e3e3e; border: 1px solid #262626; border-radius: 4px; color: #d8dfe6; white-space: nowrap; overflow: hidden; font-size: 13.300px; }
.r1 { height: 88px; } .r2 { height: 164px; } .r3 { height: 71px; }

/* status */
.status { height: 30px; flex: none; position: relative; display: flex; align-items: center; padding-left: 6px; background: #3c3c3c; font-size: 13.400px; }
.st-grid { margin-left: 17px; }
.st-sep { position: absolute; top: 5px; width: 1px; height: 20px; background: #2e2e2e; }
.st-sep.s1 { left: 487px; }
.st-sep.s2 { left: 974px; }
.panels-btn { margin-left: auto; margin-right: 5px; width: 49px; height: 23px; display: flex; align-items: center; justify-content: center; background: #4d4d4d; border: 1px solid #2a2a2a; border-radius: 4px; }

/* annotations over everything */
.annot { position: absolute; left: 0; top: 0; pointer-events: none; }
.hl { fill: none; stroke: #3a92dc; stroke-width: 3; }
.ar { fill: #3c96e6; }
```
